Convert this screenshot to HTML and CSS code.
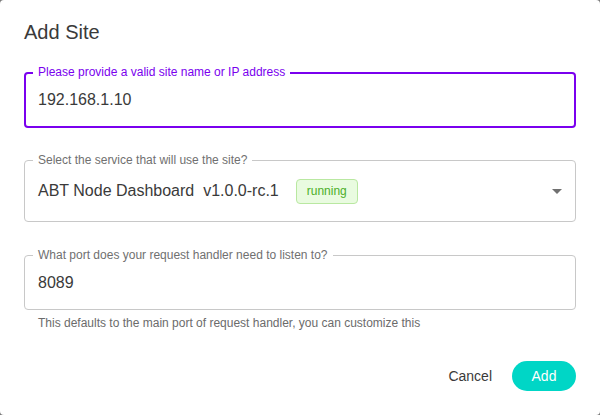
FILE: index.html
```html
<!DOCTYPE html>
<html>
<head>
<meta charset="utf-8">
<link rel="stylesheet" href="styles.css">
</head>
<body>
<div class="dialog">
  <h2 class="title">Add Site</h2>
  <div class="field focused f1">
    <span class="label">Please provide a valid site name or IP address</span>
    <span class="value">192.168.1.10</span>
  </div>
  <div class="field f2">
    <span class="label">Select the service that will use the site?</span>
    <span class="value">ABT Node Dashboard&nbsp;&nbsp;v1.0.0-rc.1</span>
    <span class="badge">running</span>
    <span class="arrow"></span>
  </div>
  <div class="field f3">
    <span class="label">What port does your request handler need to listen to?</span>
    <span class="value">8089</span>
  </div>
  <p class="helper">This defaults to the main port of request handler, you can customize this</p>
  <div class="actions">
    <button class="btn cancel">Cancel</button>
    <button class="btn add">Add</button>
  </div>
</div>
</body>
</html>
```
FILE: styles.css
```css
* { box-sizing: border-box; }
html, body { margin: 0; padding: 0; }
body {
  width: 600px;
  height: 415px;
  background: #7a7a7a;
  font-family: "Liberation Sans", Arial, sans-serif;
  overflow: hidden;
}
.dialog {
  width: 600px;
  height: 415px;
  background: #fff;
  border-radius: 4px;
  padding: 16px 24px;
  display: flex;
  flex-direction: column;
}
.title {
  margin: 0;
  font-size: 20px;
  line-height: 32px;
  font-weight: 400;
  color: #3a3a3a;
}
.field {
  position: relative;
  display: flex;
  align-items: center;
  border: 1px solid #c8c8c8;
  border-radius: 4px;
  padding: 0 13px;
}
.field.focused {
  border: 2px solid #7a00ee;
  padding: 0 12px;
}
.f1 { margin-top: 24px; height: 56px; }
.f2 { margin-top: 32px; height: 62px; }
.f3 { margin-top: 33px; height: 55px; }
.label {
  position: absolute;
  top: -8px;
  left: 8px;
  padding: 0 5px;
  background: #fff;
  font-size: 12px;
  line-height: 14px;
  color: #707070;
}
.focused .label { top: -9px; left: 7px; color: #7a00ee; }
.value {
  font-size: 16px;
  line-height: 20px;
  color: #3a3a3a;
}
.f1 .value { margin-top: -1px; }
.badge {
  margin-left: 17px;
  height: 25px;
  padding: 0 10px;
  display: inline-flex;
  align-items: center;
  font-size: 12px;
  color: #4caf2a;
  background: #e9fbe0;
  border: 1px solid #b9e8a1;
  border-radius: 4px;
}
.arrow {
  margin-left: auto;
  margin-right: 0;
  width: 0;
  height: 0;
  border-left: 5px solid transparent;
  border-right: 5px solid transparent;
  border-top: 5px solid #707070;
}
.helper {
  margin: 6px 0 0 14px;
  font-size: 12px;
  line-height: 14px;
  color: #6b6b6b;
}
.actions {
  margin-top: 31px;
  display: flex;
  justify-content: flex-end;
  align-items: center;
}
.btn {
  font-family: inherit;
  font-size: 14px;
  border: none;
  background: none;
  cursor: pointer;
}
.cancel {
  color: #3a3a3a;
  padding: 6px 8px;
  margin-right: 12px;
}
.add {
  width: 64px;
  height: 30px;
  border-radius: 15px;
  background: #00d6c6;
  color: #fff;
  padding: 0;
}
```
